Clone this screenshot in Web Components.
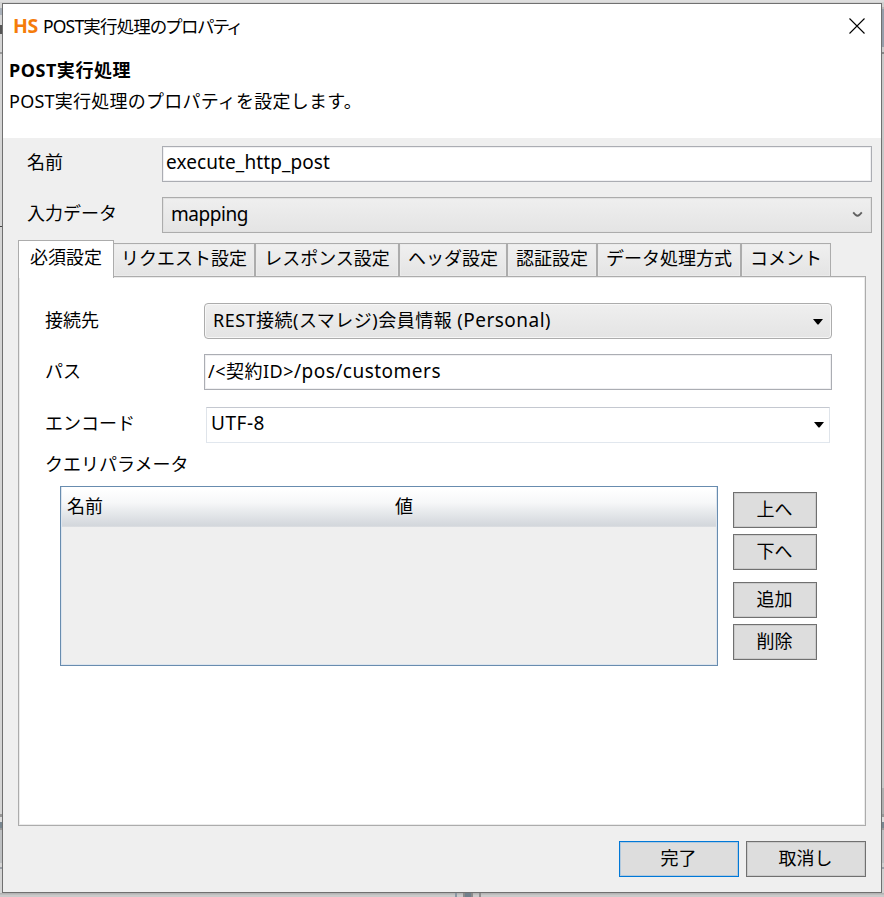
<!DOCTYPE html>
<html lang="ja">
<head>
<meta charset="utf-8">
<title>POST実行処理のプロパティ</title>
<style>
html,body{margin:0;padding:0;width:884px;height:897px;overflow:hidden}
body{font-family:"Noto Sans","Noto Sans CJK JP",sans-serif;font-size:18px;color:#000;background:#d4d4d4}
</style>
</head>
<body>
<property-dialog></property-dialog>
<script>
const define = (name, html, setup) => customElements.define(name, class extends HTMLElement {
  connectedCallback() {
    if (!this.shadowRoot) this.attachShadow({mode: 'open'}).innerHTML = html;
    if (setup) setup(this, this.shadowRoot);
  }
});

// A single line of text; "w" spreads its letters over a given width.
define('fit-text', `<style>
:host{display:inline-block;white-space:nowrap;line-height:26px;height:26px}
:host([latin]){font-size:19px}
::slotted(i){font-size:19px;font-style:normal;line-height:1}
span{display:inline-block}
</style><span><slot></slot></span>`, (el, root) => {
  const w = +el.getAttribute('w');
  if (!w) return;
  const s = root.querySelector('span');
  s.style.letterSpacing = ((w - s.getBoundingClientRect().width) / [...el.textContent].length) + 'px';
});

define('push-button', `<style>
:host{display:flex;box-sizing:border-box;width:84px;height:36px;align-items:center;justify-content:center;border:1px solid #707070;background:#ddd;box-shadow:inset 0 0 0 1px #cacaca;padding:0 1px 3px 0}
:host([primary]),:host([wide]){width:120px}
:host([primary]){border-color:#0078d7;box-shadow:inset 0 0 0 1px #b1c9de}
</style><fit-text><slot></slot></fit-text>`);

define('text-field', `<style>
:host{display:flex;box-sizing:border-box;height:36px;align-items:center;border:1px solid #abadb3;background:#fff;box-shadow:inset 0 0 0 1px #f0f0f2;padding:0 0 4px 4px}
</style><slot></slot>`);

define('drop-down', `<style>
:host{display:flex;box-sizing:border-box;height:36px;align-items:center;justify-content:space-between;border:1px solid #acacac;background:linear-gradient(#efefef,#e4e4e4);box-shadow:inset 0 0 0 1px #e1e1e1;padding:0 8px 3px 8px}
:host([round]){border-radius:4px;box-shadow:inset 0 0 0 1px #f7f7f7}
:host([plain]){background:#fff;border-color:#c4c8d0 #dfe4ea #e1e7ee #dfe4ea;box-shadow:none;padding:0 5px 4px 4px}
svg{display:block}
.arrow{margin-top:4px}.chev{display:none;margin-top:2px}
:host([chevron]) .arrow{display:none}:host([chevron]) .chev{display:block}
</style><slot></slot>
<svg class="arrow" width="10" height="6" viewBox="0 0 10 6"><path d="M0 0H10L5.5 5.5H4.5Z" fill="#000"/></svg>
<svg class="chev" width="11" height="7" viewBox="0 0 11 7"><path d="M1.2 1.4L3.5 3.8Q5.5 5.6 7.5 3.8L9.8 1.4" fill="none" stroke="#606060" stroke-width="1.9"/></svg>`);

define('field-label', `<style>:host{display:block;height:26px}</style><fit-text><slot></slot></fit-text>`);

define('tab-item', `<style>
:host{display:flex;box-sizing:border-box;height:33px;justify-content:center;padding-top:1px;border:1px solid #acacac;border-bottom:0;background:linear-gradient(#f0f0f0,#e4e4e4);box-shadow:inset 0 0 0 1px #ebebeb}
:host([active]){height:38px;margin:0 -1px -2px 0;background:#fff;box-shadow:none;padding:3px 0 0 0;position:relative;z-index:1}
</style><slot></slot>`);

define('tab-strip', `<style>
:host{display:grid;grid-template-columns:95px 142px 144px 108px 90px 144px 90px;align-items:end;height:36px}
</style><slot></slot>`);

define('query-table', `<style>
:host{display:block;box-sizing:border-box;width:658px;height:180px;border:1px solid #688caf;background:#efefef;box-shadow:inset 0 0 0 1px #dde5ee}
header{display:grid;grid-template-columns:328px 1fr;box-sizing:border-box;height:40px;padding:6px 0 0 5px;margin:0 1px;background:linear-gradient(#fff 5%,#f6f7f8 40%,#eceef0 55%,#d3d7dc 96%,#dddfe2)}
</style><header><fit-text>名前</fit-text><fit-text>値</fit-text></header>`);

define('title-bar', `<style>
:host{display:flex;align-items:center;height:44px;padding:0 16px 0 10px}
.logo{font:700 19.5px/26px "Open Sans","Noto Sans",sans-serif;color:#f57c0b;width:30px}
.title{font-size:17.5px;font-feature-settings:"palt";flex:1}
svg{display:block}
</style>
<fit-text class="logo" w="25">HS</fit-text><fit-text class="title" w="197">POST実行処理のプロパティ</fit-text>
<svg width="16" height="16" viewBox="0 0 16 16"><path d="M.5 .5L15.5 15.5M15.5 .5L.5 15.5" stroke="#000" stroke-width="1.1"/></svg>`);

define('settings-panel', `<style>
:host{display:block;box-sizing:border-box;width:848px;height:550px;border:1px solid #acacac;background:#fff;box-shadow:inset 0 0 0 1px #ebebeb;padding:26px 0 0 26px}
.row{display:grid;grid-template-columns:159px 628px;align-items:start}
.row field-label{padding-top:4px}
.path{margin-top:15px}.enc{margin-top:17px}.enc drop-down{margin:0 2px}
.enc field-label{padding-top:3px}
.q{margin-top:8px}
.tbl{display:flex;gap:15px;padding:9px 0 0 15px}
.btns{display:grid;gap:6px;align-content:start;padding-top:6px}
.btns :nth-child(3){margin-top:6px}
</style>
<div class="row"><field-label>接続先</field-label><drop-down round><fit-text w="338">REST接続(スマレジ)会員情報 (<i>Personal</i>)</fit-text></drop-down></div>
<div class="row path"><field-label>パス</field-label><text-field style="padding:0 0 2px 3px"><fit-text w="233">/&lt;契約ID&gt;<i>/pos/customers</i></fit-text></text-field></div>
<div class="row enc"><field-label>エンコード</field-label><drop-down plain><fit-text latin w="54">UTF-8</fit-text></drop-down></div>
<field-label class="q">クエリパラメータ</field-label>
<div class="tbl"><query-table></query-table><div class="btns"><push-button>上へ</push-button><push-button>下へ</push-button><push-button>追加</push-button><push-button>削除</push-button></div></div>`);

// The slivers of the application window visible around the dialog.
define('window-edges', `<style>
:host{position:absolute;inset:0;background:linear-gradient(90deg,#d5d5d5,#dedede 50%,#d0d0d0)}
svg{display:block}
</style><svg width="884" height="897" shape-rendering="crispEdges">
<rect width="884" height="3" fill="#dedede"/><rect y="2" width="884" height="1" fill="#d2d2d2"/>
<rect y="8" width="3" height="7" fill="#a9b0b9"/><rect y="25" width="2" height="9" fill="#555"/><rect y="52" width="3" height="2" fill="#999"/>
<rect y="226" width="3" height="1" fill="#444"/>
<rect x="881" y="7" width="3" height="2" fill="#b8b8b8"/><rect x="881" y="9" width="3" height="38" fill="#969eaa"/><rect x="881" y="47" width="3" height="5" fill="#ccc"/><rect x="881" y="52" width="3" height="2" fill="#888"/><rect x="881" y="54" width="3" height="734" fill="#c8c8c8"/>
<rect x="881" y="788" width="3" height="26" fill="#afafaf"/>
<g><rect y="814" width="884" height="3" fill="#989898"/><rect y="817" width="884" height="5" fill="#ddd"/><rect y="822" width="884" height="6" fill="#798791"/><rect y="828" width="884" height="2" fill="#999"/><rect y="830" width="884" height="33" fill="#bec0c2"/><rect y="867" width="884" height="2" fill="#9ba0a8"/></g>
<rect y="893" width="884" height="1" fill="#b3b3b3"/><rect y="894" width="884" height="1" fill="#bebebe"/><rect y="895" width="884" height="2" fill="#cacaca"/>
<rect x="455" y="892" width="2" height="5" fill="#8a96a3"/><rect x="463" y="892" width="10" height="5" fill="#8b8b8b"/><rect x="465" y="892" width="6" height="5" fill="#71808b"/><rect x="479" y="892" width="2" height="5" fill="#8e8e8e"/>
</svg>`);

define('property-dialog', `<style>
:host{display:block;position:relative;box-sizing:border-box;width:884px;height:897px;padding:3px 2px 4px}
.win{position:relative;box-sizing:border-box;width:880px;height:890px;border:1px solid #707070;background:#efefef}
.head{height:134px;background:#fff}
.intro{padding:9px 0 0 6px;display:flex;flex-direction:column;gap:5px;align-items:start}
b{font-weight:700;height:26px}
.form{display:grid;grid-template-columns:135px 710px;padding:8px 0 0 24px;row-gap:15px}
.form field-label{padding-top:3px}
.tabs{padding:7px 0 0 15px}
.foot{display:flex;gap:7px;justify-content:flex-end;padding:15px 15px 0 0}
</style><window-edges></window-edges>
<div class="win">
<div class="head"><title-bar></title-bar>
<div class="intro"><b><fit-text w="122">POST実行処理</fit-text></b><fit-text w="353">POST実行処理のプロパティを設定します。</fit-text></div></div>
<div class="form"><field-label>名前</field-label><text-field style="padding-left:3px"><fit-text latin w="164">execute_http_post</fit-text></text-field>
<field-label>入力データ</field-label><drop-down chevron><fit-text latin w="77">mapping</fit-text></drop-down></div>
<div class="tabs"><tab-strip><tab-item active><fit-text>必須設定</fit-text></tab-item><tab-item><fit-text>リクエスト設定</fit-text></tab-item><tab-item><fit-text>レスポンス設定</fit-text></tab-item><tab-item><fit-text>ヘッダ設定</fit-text></tab-item><tab-item><fit-text>認証設定</fit-text></tab-item><tab-item><fit-text>データ処理方式</fit-text></tab-item><tab-item><fit-text>コメント</fit-text></tab-item></tab-strip>
<settings-panel></settings-panel></div>
<div class="foot"><push-button primary>完了</push-button><push-button wide>取消し</push-button></div>
</div>`);
</script>
</body>
</html>
